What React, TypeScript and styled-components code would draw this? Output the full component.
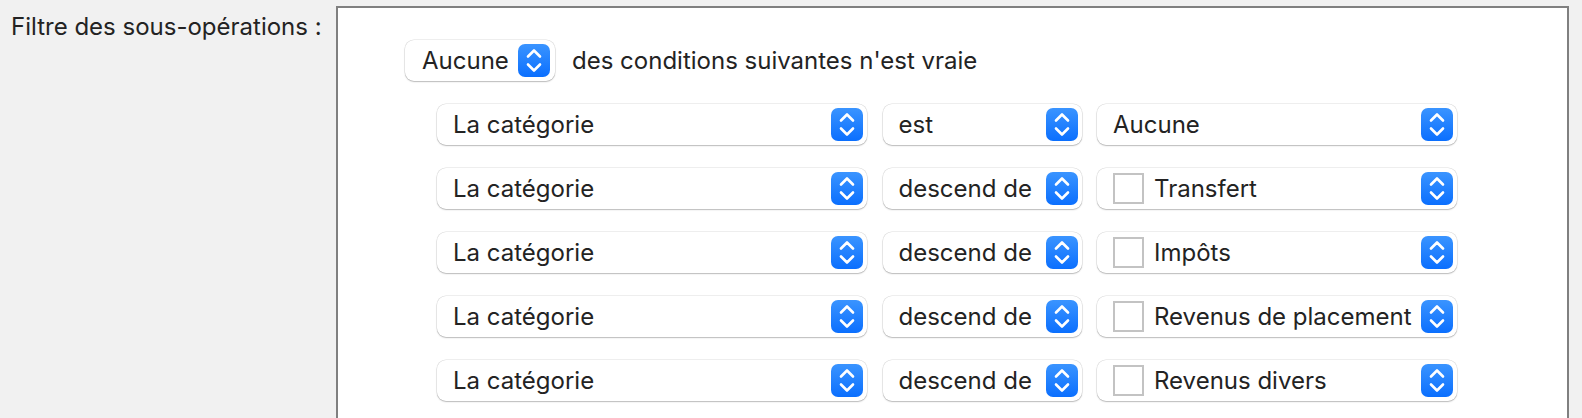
import React from "react";
import styled, { createGlobalStyle } from "styled-components";

const Global = createGlobalStyle`
  html, body {
    margin: 0;
    padding: 0;
    background: #f1f1f1;
    overflow: hidden;
  }
  body {
    font-family: Inter, "Open Sans", "Liberation Sans", sans-serif;
    color: #232323;
    -webkit-font-smoothing: antialiased;
  }
`;

const Page = styled.div`
  display: flex;
  align-items: flex-start;
  padding: 6px 13px 0 11px;
  height: 412px;
`;

const Label = styled.div`
  width: 325px;
  flex: none;
  padding-top: 6px;
  font-size: 24px;
  line-height: 29px;
  white-space: nowrap;
`;

const Panel = styled.div`
  flex: 1;
  height: 520px;
  background: #ffffff;
  border: 2px solid #808080;
  padding: 32px 0 0 67px;
  box-sizing: border-box;
`;

const Header = styled.div`
  display: flex;
  align-items: center;
  gap: 17px;
  font-size: 24px;
`;

const Rows = styled.div`
  display: flex;
  flex-direction: column;
  gap: 23px;
  margin-top: 23px;
  padding-left: 32px;
`;

const Row = styled.div`
  display: grid;
  grid-template-columns: 430px 199px 360px;
  column-gap: 15.5px;
`;

const PopupBox = styled.div<{ $w?: number; $pl?: number; $pr?: number }>`
  display: flex;
  align-items: center;
  box-sizing: border-box;
  width: ${(p) => (p.$w ? `${p.$w}px` : "100%")};
  height: 41px;
  padding-left: ${(p) => p.$pl ?? 16}px;
  padding-right: ${(p) => p.$pr ?? 4}px;
  background: #ffffff;
  border-radius: 9px;
  box-shadow: 0 0 0 0.5px rgba(0, 0, 0, 0.13), 0 1px 1.5px rgba(0, 0, 0, 0.22);
  font-size: 24px;
  line-height: 29px;
  white-space: nowrap;
`;

const PopupText = styled.span`
  flex: 1;
  overflow: hidden;
`;

const Stepper = styled.span`
  flex: none;
  width: 32px;
  height: 33px;
  border-radius: 7px;
  background: linear-gradient(#3a94ff, #0b6ffe);
  display: flex;
  align-items: center;
  justify-content: center;
`;

const Check = styled.span`
  flex: none;
  width: 31px;
  height: 31px;
  box-sizing: border-box;
  border: 2px solid #c3c3c3;
  background: #fff;
  margin-right: 10px;
`;

const Chevrons = () => (
  <svg width="32" height="33" viewBox="0 0 32 33" fill="none">
    <path
      d="M10 12.5 L16 6.5 L22 12.5 M10 20.5 L16 26.5 L22 20.5"
      stroke="#fff"
      strokeWidth="2.6"
      strokeLinecap="round"
      strokeLinejoin="round"
    />
  </svg>
);

type PopupProps = {
  text: string;
  check?: boolean;
  w?: number;
  pl?: number;
  pr?: number;
};

const Popup = ({ text, check, w, pl, pr }: PopupProps) => (
  <PopupBox $w={w} $pl={pl} $pr={pr}>
    {check && <Check />}
    <PopupText>{text}</PopupText>
    <Stepper>
      <Chevrons />
    </Stepper>
  </PopupBox>
);

const rows: { op: string; value: string; check: boolean }[] = [
  { op: "est", value: "Aucune", check: false },
  { op: "descend de", value: "Transfert", check: true },
  { op: "descend de", value: "Impôts", check: true },
  { op: "descend de", value: "Revenus de placement", check: true },
  { op: "descend de", value: "Revenus divers", check: true },
];

export default function App() {
  return (
    <>
      <Global />
      <Page>
        <Label>Filtre des sous-opérations :</Label>
        <Panel>
          <Header>
            <Popup text="Aucune" w={150} pl={17} pr={5} />
            <span>des conditions suivantes n'est vraie</span>
          </Header>
          <Rows>
            {rows.map((r, i) => (
              <Row key={i}>
                <Popup text="La catégorie" />
                <Popup text={r.op} />
                <Popup text={r.value} check={r.check} />
              </Row>
            ))}
          </Rows>
        </Panel>
      </Page>
    </>
  );
}
